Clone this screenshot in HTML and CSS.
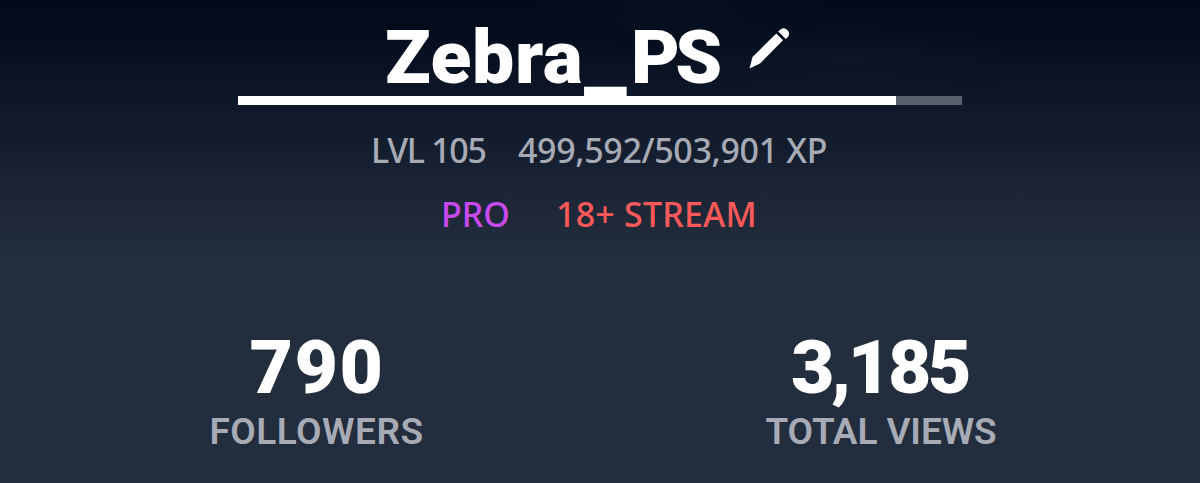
FILE: index.html
```
<!DOCTYPE html>
<html lang="en">
<head>
<meta charset="utf-8">
<title>Zebra_PS</title>
<link rel="stylesheet" href="styles.css">
</head>
<body>
<main class="profile">
  <header class="identity">
    <h1 class="name"><span class="name-first">Zebra</span><span class="name-joint">_</span><span class="name-last">PS</span></h1>
    <svg class="edit" viewBox="0 0 42 42" width="42" height="42" aria-label="Edit">
      <path d="M.5 40.500L3.500 29L27.300 5.500L34 12.200L11 35.500Z"/>
      <path d="M29.200 3.500L31.500 1.500Q35 -1 38.300 2Q41.300 5 39.300 8.500L36.800 11Z"/>
    </svg>
  </header>
  <div class="bar"><div class="bar-fill"></div></div>
  <div class="row xp"><span class="level">LVL 105</span><span class="points">499,592/503,901 XP</span></div>
  <div class="row tags"><span class="pro">PRO</span><span class="mature">18+ STREAM</span></div>
  <section class="stats">
    <div class="stat"><strong class="count followers">790</strong><span class="label label-followers">FOLLOWERS</span></div>
    <div class="stat"><strong class="count views">3,185</strong><span class="label label-views">TOTAL VIEWS</span></div>
  </section>
</main>
</body>
</html>
```
FILE: styles.css
```
* { box-sizing: border-box; }
body { margin: 0; background: #222d3d; }
.profile {
  height: 483px;
  overflow: hidden;
  padding-top: 17px;
  display: flex;
  flex-direction: column;
  background:
    radial-gradient(ellipse 180px 45px at 850px 60px, #18263233, transparent),
    radial-gradient(ellipse 150px 30px at 680px 15px, #18263233, transparent),
    linear-gradient(#010b1c 0, #040d1e 35px, #0d1627 90px, #151e2f 150px, #1d2737 205px, #222d3d 260px);
  font-family: Roboto, sans-serif;
}
.identity { display: flex; height: 79px; padding-left: 385px; }
.name { margin: 0; display: flex; color: #fff; font-size: 75px; font-weight: 900; line-height: 80px; }
.name-first { width: 199px; letter-spacing: .6px; }
.name-joint { width: 47px; font-size: 96px; font-weight: 700; transform: translateY(-3px); }
.name-last { width: 118px; letter-spacing: -4.500px; }
.edit { margin-top: 11px; fill: #fff; }
.bar { width: 724px; height: 9px; margin-left: 238px; background: #5a606e; flex: none; }
.bar-fill { width: 658px; height: 9px; background: #fff; }
.row { display: flex; height: 64px; line-height: 65px; font-family: "Noto Sans", sans-serif; font-size: 34px; font-weight: 500; white-space: nowrap; flex: none; }
.xp { margin-top: 13px; padding-left: 371px; color: #a7abb5; }
.level { width: 147px; letter-spacing: -1.3px; }
.points { letter-spacing: -.35px; }
.tags { padding-left: 441px; }
.pro { width: 115px; color: #c849ee; }
.mature { color: #ff5959; letter-spacing: .2px; }
.stats { display: grid; grid-template-columns: 564px 564px; justify-content: center; margin-top: 86px; }
.stat { display: flex; flex-direction: column; align-items: center; }
.count { color: #fff; font-size: 75px; font-weight: 900; line-height: 70px; }
.followers { margin-right: 2px; letter-spacing: 1.5px; }
.views { letter-spacing: -3.4px; margin-right: 5px; }
.label { color: #a7abb5; font-size: 37px; font-weight: 600; line-height: 44px; margin-top: 8px; }
.label-followers { letter-spacing: .5px; margin-right: 3px; }
.label-views { margin-right: 2px; letter-spacing: -.1px; }
```
